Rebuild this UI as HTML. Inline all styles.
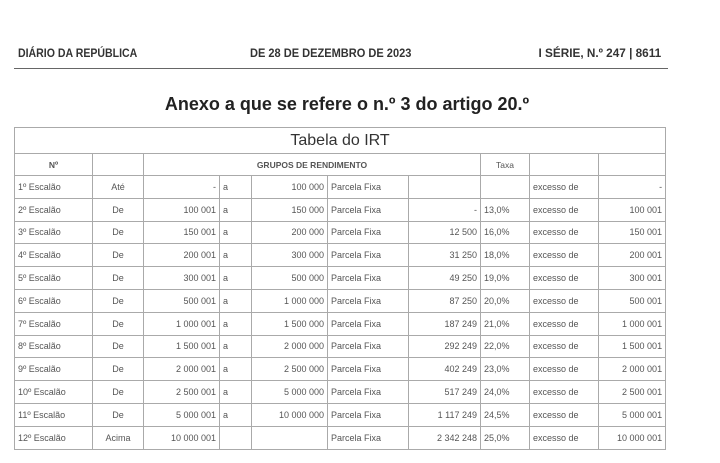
<!DOCTYPE html>
<html><head><meta charset="utf-8"><style>
body{margin:0;width:720px;height:463px;background:#fff;position:relative;overflow:hidden;font-family:"Liberation Sans",sans-serif;color:#333}
.hd{position:absolute;top:46px;font-size:12px;font-weight:bold;color:#333;transform:scaleX(.88)}
.line{position:absolute;left:14px;top:68px;width:654px;height:1px;background:#666}
.title{position:absolute;top:94px;left:0;width:694px;text-align:center;font-size:18px;font-weight:bold;color:#222}
table{position:absolute;left:14px;top:127px;border-collapse:collapse;table-layout:fixed;width:651px}
td{border:1px solid #aaa;font-size:9px;padding:0 3px;height:21.8px;white-space:nowrap;overflow:hidden;color:#555}
tr.t td{height:25px;font-size:16px;text-align:center;color:#333}
tr.h td{height:21px;font-weight:bold;font-size:8.5px;text-align:center}
.c{text-align:center}.r{text-align:right}
</style></head><body>
<div class="hd" style="left:18px;transform-origin:left">DIÁRIO DA REPÚBLICA</div>
<div class="hd" style="left:250px;transform-origin:left;transform:scaleX(.92)">DE 28 DE DEZEMBRO DE 2023</div>
<div class="hd" style="right:59px;transform-origin:right;transform:scaleX(.98)">I SÉRIE, N.º 247 | 8611</div>
<div class="line"></div>
<div class="title">Anexo a que se refere o n.º 3 do artigo 20.º</div>
<table>
<colgroup><col style="width:78px"><col style="width:51px"><col style="width:76px"><col style="width:32px"><col style="width:76px"><col style="width:81px"><col style="width:72px"><col style="width:49px"><col style="width:69px"><col style="width:67px"></colgroup>
<tr class="t"><td colspan="10">Tabela do IRT</td></tr>
<tr class="h"><td>Nº</td><td></td><td colspan="5">GRUPOS DE RENDIMENTO</td><td style="font-weight:normal">Taxa</td><td></td><td></td></tr>
<tr><td>1º Escalão</td><td class="c">Até</td><td class="r">-</td><td>a</td><td class="r">100 000</td><td>Parcela Fixa</td><td></td><td></td><td>excesso de</td><td class="r">-</td></tr>
<tr><td>2º Escalão</td><td class="c">De</td><td class="r">100 001</td><td>a</td><td class="r">150 000</td><td>Parcela Fixa</td><td class="r">-</td><td>13,0%</td><td>excesso de</td><td class="r">100 001</td></tr>
<tr><td>3º Escalão</td><td class="c">De</td><td class="r">150 001</td><td>a</td><td class="r">200 000</td><td>Parcela Fixa</td><td class="r">12 500</td><td>16,0%</td><td>excesso de</td><td class="r">150 001</td></tr>
<tr><td>4º Escalão</td><td class="c">De</td><td class="r">200 001</td><td>a</td><td class="r">300 000</td><td>Parcela Fixa</td><td class="r">31 250</td><td>18,0%</td><td>excesso de</td><td class="r">200 001</td></tr>
<tr><td>5º Escalão</td><td class="c">De</td><td class="r">300 001</td><td>a</td><td class="r">500 000</td><td>Parcela Fixa</td><td class="r">49 250</td><td>19,0%</td><td>excesso de</td><td class="r">300 001</td></tr>
<tr><td>6º Escalão</td><td class="c">De</td><td class="r">500 001</td><td>a</td><td class="r">1 000 000</td><td>Parcela Fixa</td><td class="r">87 250</td><td>20,0%</td><td>excesso de</td><td class="r">500 001</td></tr>
<tr><td>7º Escalão</td><td class="c">De</td><td class="r">1 000 001</td><td>a</td><td class="r">1 500 000</td><td>Parcela Fixa</td><td class="r">187 249</td><td>21,0%</td><td>excesso de</td><td class="r">1 000 001</td></tr>
<tr><td>8º Escalão</td><td class="c">De</td><td class="r">1 500 001</td><td>a</td><td class="r">2 000 000</td><td>Parcela Fixa</td><td class="r">292 249</td><td>22,0%</td><td>excesso de</td><td class="r">1 500 001</td></tr>
<tr><td>9º Escalão</td><td class="c">De</td><td class="r">2 000 001</td><td>a</td><td class="r">2 500 000</td><td>Parcela Fixa</td><td class="r">402 249</td><td>23,0%</td><td>excesso de</td><td class="r">2 000 001</td></tr>
<tr><td>10º Escalão</td><td class="c">De</td><td class="r">2 500 001</td><td>a</td><td class="r">5 000 000</td><td>Parcela Fixa</td><td class="r">517 249</td><td>24,0%</td><td>excesso de</td><td class="r">2 500 001</td></tr>
<tr><td>11º Escalão</td><td class="c">De</td><td class="r">5 000 001</td><td>a</td><td class="r">10 000 000</td><td>Parcela Fixa</td><td class="r">1 117 249</td><td>24,5%</td><td>excesso de</td><td class="r">5 000 001</td></tr>
<tr><td>12º Escalão</td><td class="c">Acima</td><td class="r">10 000 001</td><td></td><td></td><td>Parcela Fixa</td><td class="r">2 342 248</td><td>25,0%</td><td>excesso de</td><td class="r">10 000 001</td></tr>
</table>
</body></html>
